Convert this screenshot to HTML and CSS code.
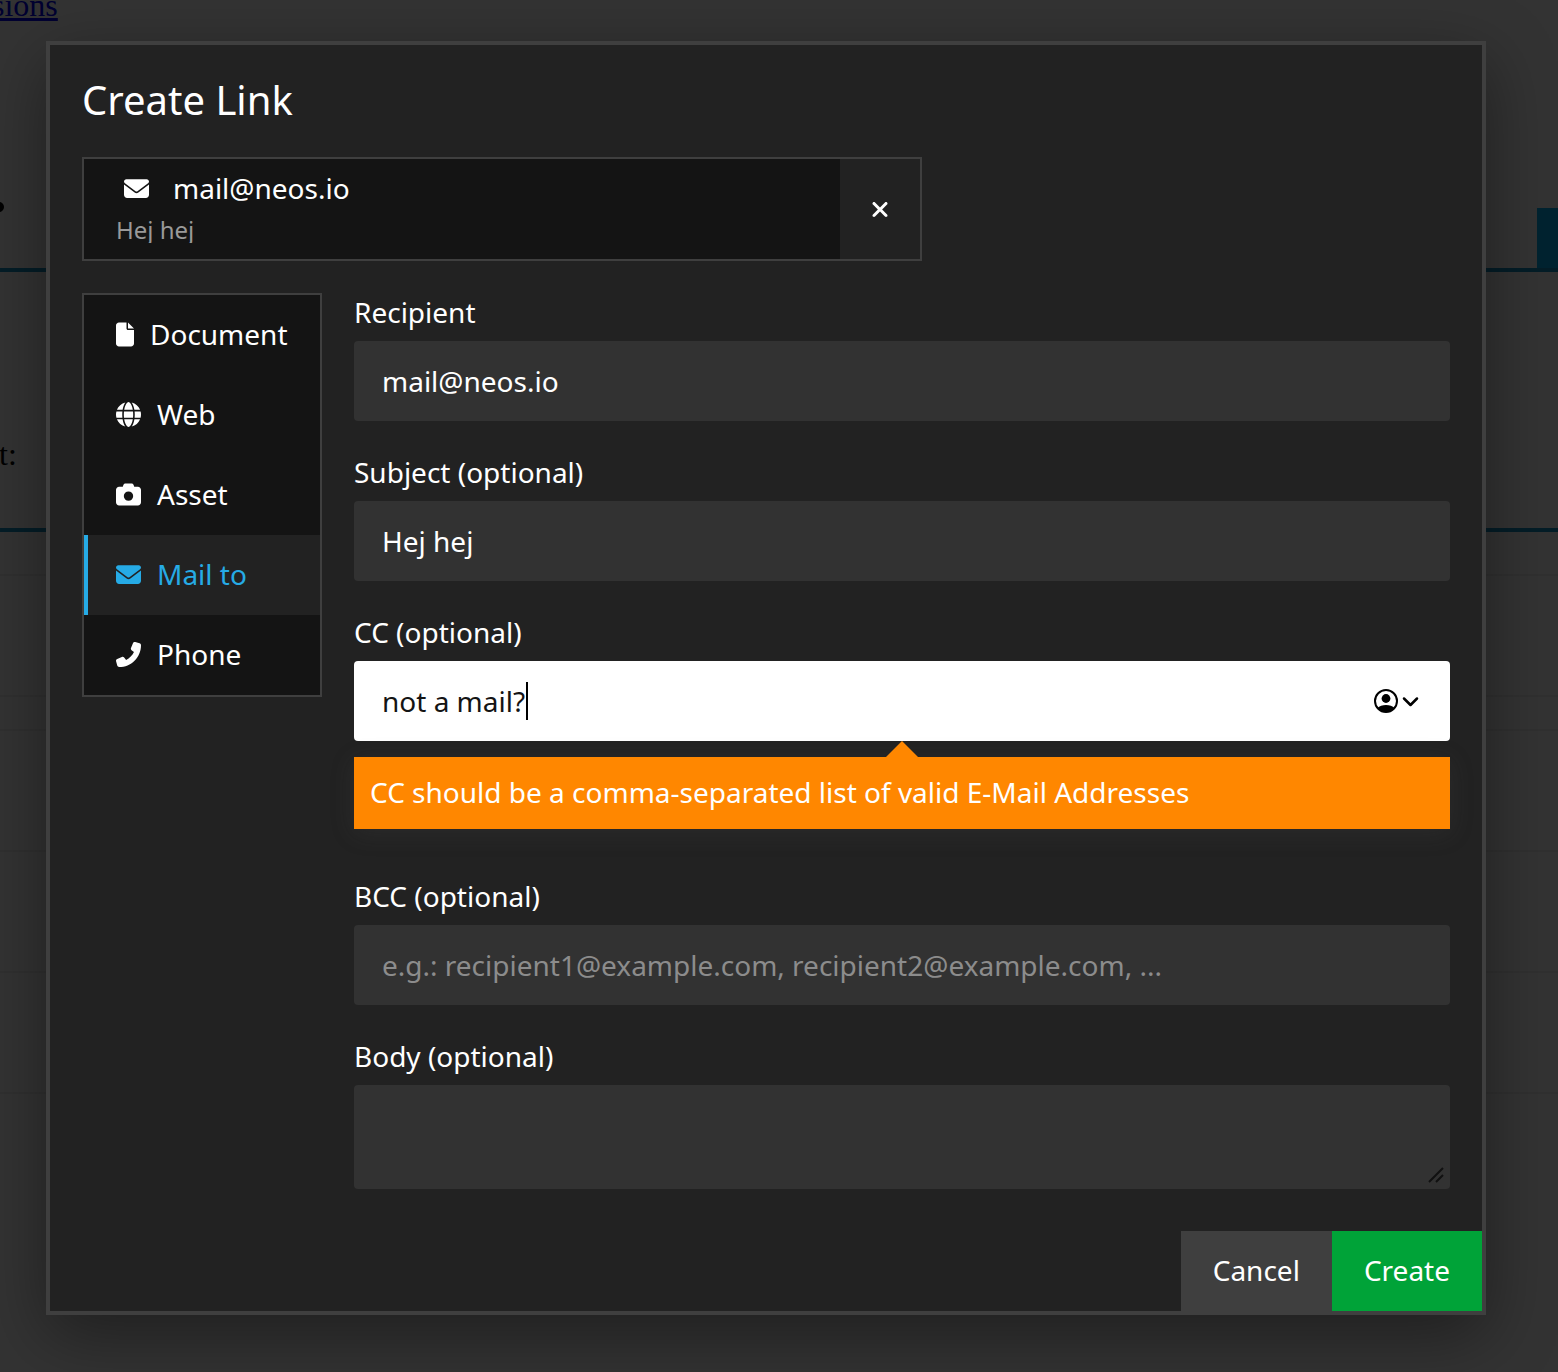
FILE: index.html
```html
<!DOCTYPE html>
<html lang="en">
<head>
    <meta charset="UTF-8">
    <meta name="viewport" content="width=device-width, initial-scale=1.0">
    <title>Create Link</title>
    <link rel="stylesheet" href="styles.css">
</head>
<body>
    <div class="page">
        <section class="block block-intro">
            <a class="page-link" href="#">sions</a>
            <div class="block-row">
                <span class="bullet"></span>
                <span class="block-handle"></span>
            </div>
        </section>
        <section class="block block-text">
            <p>t:</p>
        </section>
        <div class="rows">
            <div class="row row-small"></div>
            <div class="row"></div>
            <div class="row row-gap"></div>
            <div class="row"></div>
            <div class="row"></div>
            <div class="row"></div>
        </div>
    </div>

    <div class="overlay">
        <form class="dialog" role="dialog" aria-labelledby="dialog-title">
            <div class="dialog-body">
                <h1 id="dialog-title">Create Link</h1>

                <div class="preview">
                    <div class="preview-info">
                        <div class="preview-title">
                            <svg class="icon" viewBox="0 0 512 512"><path d="M48 64C21.500 64 0 85.500 0 112c0 15.100 7.100 29.300 19.200 38.400L236.800 313.600c11.400 8.500 27 8.500 38.400 0L492.800 150.400c12.100-9.100 19.200-23.300 19.200-38.400c0-26.500-21.500-48-48-48L48 64zM0 176L0 384c0 35.300 28.700 64 64 64l384 0c35.300 0 64-28.700 64-64l0-208L294.400 339.200c-22.800 17.100-54 17.100-76.800 0L0 176z"/></svg>
                            <span>mail@neos.io</span>
                        </div>
                        <div class="preview-subtitle">Hej hej</div>
                    </div>
                    <button type="button" class="preview-close" aria-label="Remove link">
                        <svg class="icon icon-narrow" viewBox="0 0 384 512"><path d="M342.600 150.600c12.500-12.500 12.500-32.800 0-45.300s-32.800-12.500-45.300 0L192 210.700 86.600 105.400c-12.500-12.500-32.800-12.500-45.300 0s-12.500 32.800 0 45.300L146.700 256 41.400 361.400c-12.500 12.500-12.500 32.800 0 45.300s32.800 12.500 45.300 0L192 301.300 297.400 406.600c12.500 12.500 32.800 12.500 45.300 0s12.500-32.800 0-45.300L237.300 256 342.600 150.600z"/></svg>
                    </button>
                </div>

                <div class="columns">
                    <nav class="tabs">
                        <button type="button" class="tab">
                            <svg class="icon icon-narrow" viewBox="0 0 384 512"><path d="M0 64C0 28.700 28.700 0 64 0L224 0l0 128c0 17.700 14.300 32 32 32l128 0 0 288c0 35.300-28.700 64-64 64L64 512c-35.300 0-64-28.700-64-64L0 64zm384 64l-128 0L256 0 384 128z"/></svg>
                            Document
                        </button>
                        <button type="button" class="tab">
                            <svg class="icon" viewBox="0 0 512 512"><path d="M352 256c0 22.200-1.200 43.600-3.300 64l-185.300 0c-2.200-20.400-3.300-41.800-3.300-64s1.200-43.600 3.300-64l185.300 0c2.200 20.400 3.300 41.800 3.300 64zm28.800-64l123.100 0c5.300 20.500 8.100 41.900 8.100 64s-2.800 43.500-8.100 64l-123.100 0c2.100-20.600 3.200-42 3.200-64s-1.100-43.400-3.200-64zm112.600-32l-116.700 0c-10-63.900-29.800-117.400-55.300-151.600c78.300 20.700 142 77.500 171.900 151.600zm-149.100 0l-176.600 0c6.100-36.400 15.500-68.600 27-94.700c10.500-23.600 22.200-40.700 33.500-51.500C239.400 3.200 248.700 0 256 0s16.600 3.200 27.800 13.800c11.300 10.800 23 27.900 33.500 51.500c11.600 26 20.900 58.200 27 94.700zm-209 0L18.600 160C48.600 85.900 112.200 29.100 190.600 8.400C165.100 42.600 145.300 96.100 135.300 160zM8.100 192l123.100 0c-2.100 20.600-3.200 42-3.200 64s1.100 43.400 3.200 64L8.100 320C2.800 299.500 0 278.100 0 256s2.800-43.500 8.100-64zM194.700 446.600c-11.600-26-20.900-58.200-27-94.600l176.600 0c-6.100 36.400-15.500 68.600-27 94.600c-10.500 23.600-22.200 40.700-33.500 51.500C272.600 508.800 263.300 512 256 512s-16.600-3.200-27.800-13.800c-11.300-10.800-23-27.900-33.500-51.500zM135.300 352c10 63.900 29.800 117.400 55.300 151.600C112.200 482.900 48.600 426.100 18.600 352l116.700 0zm358.100 0c-30 74.100-93.600 130.900-171.900 151.600c25.500-34.200 45.200-87.700 55.300-151.600l116.700 0z"/></svg>
                            Web
                        </button>
                        <button type="button" class="tab">
                            <svg class="icon" viewBox="0 0 512 512"><path d="M149.100 64.800L138.700 96 64 96C28.700 96 0 124.700 0 160L0 416c0 35.300 28.700 64 64 64l384 0c35.300 0 64-28.700 64-64l0-256c0-35.300-28.700-64-64-64l-74.700 0L362.900 64.800C356.400 45.200 338.100 32 317.400 32L194.600 32c-20.700 0-39 13.200-45.500 32.800zM256 192a96 96 0 1 1 0 192 96 96 0 1 1 0-192z"/></svg>
                            Asset
                        </button>
                        <button type="button" class="tab active">
                            <svg class="icon" viewBox="0 0 512 512"><path d="M48 64C21.500 64 0 85.500 0 112c0 15.100 7.100 29.300 19.200 38.400L236.800 313.600c11.400 8.500 27 8.500 38.400 0L492.800 150.400c12.100-9.100 19.200-23.300 19.200-38.400c0-26.500-21.500-48-48-48L48 64zM0 176L0 384c0 35.300 28.700 64 64 64l384 0c35.300 0 64-28.700 64-64l0-208L294.400 339.200c-22.800 17.100-54 17.100-76.800 0L0 176z"/></svg>
                            Mail to
                        </button>
                        <button type="button" class="tab">
                            <svg class="icon" viewBox="0 0 512 512"><path transform="matrix(-1 0 0 1 512 0)" d="M164.900 24.600c-7.700-18.600-28-28.500-47.400-23.200l-88 24C12.100 30.200 0 46 0 64C0 311.400 200.600 512 448 512c18 0 33.800-12.100 38.600-29.500l24-88c5.300-19.400-4.600-39.700-23.200-47.400l-96-40c-16.300-6.800-35.200-2.100-46.300 11.600L304.700 368C234.300 334.700 177.300 277.700 144 207.300L193.300 167c13.700-11.200 18.400-30 11.600-46.300l-40-96z"/></svg>
                            Phone
                        </button>
                    </nav>

                    <div class="fields">
                        <div class="field">
                            <label for="recipient">Recipient</label>
                            <input type="text" id="recipient" value="mail@neos.io">
                        </div>
                        <div class="field">
                            <label for="subject">Subject (optional)</label>
                            <input type="text" id="subject" value="Hej hej">
                        </div>
                        <div class="field">
                            <label for="cc">CC (optional)</label>
                            <div class="control">
                                <input type="text" id="cc" class="focused" value="not a mail?">
                                <span class="caret"></span>
                                <svg class="autofill" viewBox="0 0 46 26" fill="none" stroke="#000">
                                    <circle cx="13" cy="13" r="11" stroke-width="2"/>
                                    <circle cx="13" cy="10.500" r="4.400" fill="#000" stroke="none"/>
                                    <path d="M4.500 20C8 16 18 16 21.500 20A11 11 0 0 1 4.500 20z" fill="#000" stroke="none"/>
                                    <path d="M31 10.500l6.500 6.500 6.500-6.500" stroke-width="2.500" stroke-linecap="round" stroke-linejoin="round"/>
                                </svg>
                            </div>
                            <div class="error">CC should be a comma-separated list of valid E-Mail Addresses</div>
                        </div>
                        <div class="field">
                            <label for="bcc">BCC (optional)</label>
                            <input type="text" id="bcc" placeholder="e.g.: recipient1@example.com, recipient2@example.com, ...">
                        </div>
                        <div class="field">
                            <label for="body">Body (optional)</label>
                            <div class="control">
                                <textarea id="body"></textarea>
                                <svg class="grip" viewBox="0 0 16 16" stroke="#111" stroke-width="2"><path d="M1 15L15 1M8 15l7-7"/></svg>
                            </div>
                        </div>
                    </div>
                </div>
            </div>

            <div class="actions">
                <button type="button" class="btn">Cancel</button>
                <button type="submit" class="btn btn-create">Create</button>
            </div>
        </form>
    </div>
</body>
</html>
```
FILE: styles.css
```css
* {
    box-sizing: border-box;
}

body {
    margin: 0;
    background: #fff;
    overflow: hidden;
    font-family: "Noto Sans", sans-serif;
    font-size: 28px;
    line-height: 38px;
}

/* page behind the dialog */
.page {
    min-height: 100vh;
    font-family: "Liberation Serif", serif;
    font-size: 32px;
    color: #000;
}

.block {
    display: flex;
    flex-direction: column;
    border-bottom: 4px solid #1490c4;
}

.block-intro {
    height: 272px;
    justify-content: space-between;
}

.page-link {
    margin: -14px 0 0 -8px;
    color: #0000ee;
}

.block-row {
    display: flex;
    justify-content: space-between;
    height: 60px;
}

.bullet {
    width: 10px;
    height: 10px;
    margin: -6px 0 0 -6px;
    border-radius: 50%;
    background: #000;
}

.block-handle {
    width: 21px;
    background: #00adee;
}

.block-text {
    height: 260px;
    justify-content: center;
}

.block-text p {
    margin: 108px 0 0 -1px;
}

.row {
    height: 121px;
    border-bottom: 2px solid #eee;
}

.row-small {
    height: 44px;
}

.row-gap {
    height: 34px;
}

.overlay {
    position: absolute;
    top: 0;
    left: 0;
    width: 100%;
    min-height: 100%;
    padding: 41px 72px 57px 46px;
    background: rgba(0, 0, 0, 0.8);
}

/* dialog */
.dialog {
    border: 4px solid #3f3f3f;
    background: #222;
    color: #fff;
    box-shadow: 0 20px 64px rgba(0, 0, 0, 0.4);
}

.dialog-body {
    padding: 32px 32px 42px;
}

h1 {
    margin: 0 0 34px;
    font-size: 40px;
    font-weight: 400;
    line-height: 46px;
}

button,
input,
textarea {
    font: inherit;
    color: inherit;
    border: none;
}

button {
    cursor: pointer;
}

.icon {
    width: 25px;
    height: 25px;
    flex: none;
    fill: currentColor;
}

.icon-narrow {
    width: 18px;
}

.preview {
    display: flex;
    max-width: 840px;
    margin-bottom: 32px;
    border: 2px solid #3f3f3f;
}

.preview-info {
    flex: 1;
    padding: 10px 32px 16px;
    background: #141414;
}

.preview-title {
    display: flex;
    align-items: center;
    gap: 24px;
    padding-left: 8px;
}

.preview-subtitle {
    height: 24px;
    margin-top: 12px;
    overflow: hidden;
    font-size: 24px;
    line-height: 22px;
    color: #999;
}

.preview-close {
    display: flex;
    align-items: center;
    justify-content: center;
    width: 80px;
    background: #222;
}

.columns {
    display: flex;
    align-items: flex-start;
    gap: 32px;
}

.tabs {
    flex: none;
    width: 240px;
    border: 2px solid #3f3f3f;
    background: #141414;
}

.tab {
    display: flex;
    align-items: center;
    gap: 16px;
    width: 100%;
    height: 80px;
    padding: 0 28px 2px;
    border-left: 4px solid transparent;
    background: none;
}

.tab.active {
    border-left-color: #26abe6;
    background: #222;
    color: #26abe6;
}

.fields {
    flex: 1;
    display: flex;
    flex-direction: column;
    gap: 32px;
}

label {
    display: block;
    margin-bottom: 10px;
}

input,
textarea {
    display: block;
    width: 100%;
    height: 80px;
    padding: 0 28px;
    border-radius: 4px;
    outline: none;
    background: #323232;
}

textarea {
    height: 104px;
    padding: 20px 28px;
    resize: none;
}

input::placeholder {
    color: #8c8c8c;
}

input.focused {
    background: #fff;
    color: #141414;
}

.control {
    position: relative;
}

.caret {
    position: absolute;
    top: 21px;
    left: 172px;
    width: 2px;
    height: 38px;
    background: #000;
}

.autofill {
    position: absolute;
    top: 27px;
    right: 31px;
    width: 46px;
    height: 26px;
}

.grip {
    position: absolute;
    right: 6px;
    bottom: 6px;
    width: 16px;
    height: 16px;
}

.error {
    position: relative;
    margin: 16px 0;
    padding: 16px 16px 18px;
    background: #ff8700;
    box-shadow: 0 4px 24px rgba(80, 80, 80, 0.2);
}

.error::before {
    content: "";
    position: absolute;
    top: -16px;
    left: 50%;
    margin-left: -16px;
    border: 16px solid transparent;
    border-top: none;
    border-bottom-color: #ff8700;
}

.actions {
    display: flex;
    justify-content: flex-end;
}

.btn {
    height: 80px;
    padding: 0 32px 2px;
    background: #3f3f3f;
}

.btn-create {
    background: #00a338;
}
```
